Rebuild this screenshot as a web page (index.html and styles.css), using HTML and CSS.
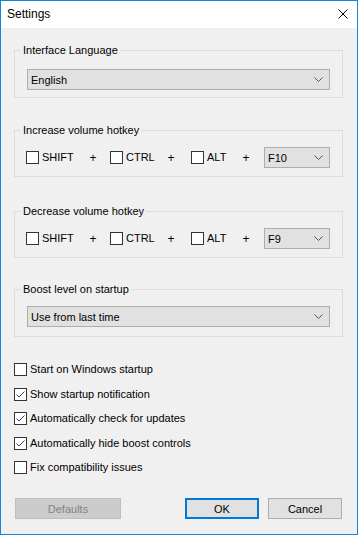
FILE: index.html
```html
<!DOCTYPE html>
<html lang="en">
<head>
  <meta charset="UTF-8" />
  <title>Settings</title>
  <link rel="stylesheet" href="styles.css">
</head>
<body>
  <div class="window">
    <!-- Title bar -->
    <div class="titlebar">
      <span class="title">Settings</span>
      <svg class="close" width="10" height="10" viewBox="0 0 10 10">
        <path d="M0.5 0.5 L9.5 9.5 M9.5 0.5 L0.5 9.5" stroke="#000" stroke-width="1" fill="none"/>
      </svg>
    </div>

    <div class="content">
      <!-- Language -->
      <div class="group group-lang">
        <span class="group-title">Interface Language</span>
        <div class="combo combo-wide">
          <span>English</span>
          <svg class="chevron" width="9" height="5" viewBox="0 0 9 5"><path d="M0.5 0.5 L4.5 4.5 L8.5 0.5" stroke="#555" fill="none"/></svg>
        </div>
      </div>

      <!-- Increase hotkey -->
      <div class="group group-up">
        <span class="group-title">Increase volume hotkey</span>
        <div class="hotkey-row">
          <label class="check w-shift"><span class="box"></span>SHIFT</label>
          <span class="plus">+</span>
          <label class="check w-ctrl"><span class="box"></span>CTRL</label>
          <span class="plus">+</span>
          <label class="check w-alt"><span class="box"></span>ALT</label>
          <span class="plus">+</span>
          <div class="combo combo-key">
            <span>F10</span>
            <svg class="chevron" width="9" height="5" viewBox="0 0 9 5"><path d="M0.5 0.5 L4.5 4.5 L8.5 0.5" stroke="#555" fill="none"/></svg>
          </div>
        </div>
      </div>

      <!-- Decrease hotkey -->
      <div class="group group-down">
        <span class="group-title">Decrease volume hotkey</span>
        <div class="hotkey-row">
          <label class="check w-shift"><span class="box"></span>SHIFT</label>
          <span class="plus">+</span>
          <label class="check w-ctrl"><span class="box"></span>CTRL</label>
          <span class="plus">+</span>
          <label class="check w-alt"><span class="box"></span>ALT</label>
          <span class="plus">+</span>
          <div class="combo combo-key">
            <span>F9</span>
            <svg class="chevron" width="9" height="5" viewBox="0 0 9 5"><path d="M0.5 0.5 L4.5 4.5 L8.5 0.5" stroke="#555" fill="none"/></svg>
          </div>
        </div>
      </div>

      <!-- Boost level -->
      <div class="group group-boost">
        <span class="group-title">Boost level on startup</span>
        <div class="combo combo-wide">
          <span>Use from last time</span>
          <svg class="chevron" width="9" height="5" viewBox="0 0 9 5"><path d="M0.5 0.5 L4.5 4.5 L8.5 0.5" stroke="#555" fill="none"/></svg>
        </div>
      </div>

      <!-- Options -->
      <div class="options">
        <label class="check"><span class="box"></span>Start on Windows startup</label>
        <label class="check"><span class="box"><svg width="11" height="11" viewBox="0 0 11 11"><path d="M1.5 5.5 L4 8 L9.5 2.5" stroke="#444" fill="none"/></svg></span>Show startup notification</label>
        <label class="check"><span class="box"><svg width="11" height="11" viewBox="0 0 11 11"><path d="M1.5 5.5 L4 8 L9.5 2.5" stroke="#444" fill="none"/></svg></span>Automatically check for updates</label>
        <label class="check"><span class="box"><svg width="11" height="11" viewBox="0 0 11 11"><path d="M1.5 5.5 L4 8 L9.5 2.5" stroke="#444" fill="none"/></svg></span>Automatically hide boost controls</label>
        <label class="check"><span class="box"></span>Fix compatibility issues</label>
      </div>

      <!-- Buttons -->
      <div class="footer">
        <button class="btn btn-defaults" disabled>Defaults</button>
        <div class="footer-right">
          <button class="btn btn-ok">OK</button>
          <button class="btn">Cancel</button>
        </div>
      </div>
    </div>
  </div>
</body>
</html>
```

FILE: styles.css
```css
/* Window */
body {
  margin: 0;
  background: #ffffff;
  font-family: 'Liberation Sans', Arial, sans-serif;
  font-size: 11px;
  color: #000;
}
.window {
  box-sizing: border-box;
  width: 358px;
  height: 535px;
  border: 1px solid #1883d7;
  background: #f0f0f0;
  display: flex;
  flex-direction: column;
}
.titlebar {
  height: 27px;
  background: #fff;
  display: flex;
  align-items: center;
  justify-content: space-between;
  padding: 0 9px 0 6px;
}
.title {
  font-size: 12px;
  margin-top: -1px;
}
.close {
  margin-top: -2px;
}
.content {
  padding: 22px 14px 0 13px;
}

/* Group boxes */
.group {
  position: relative;
  border: 1px solid #dcdcdc;
}
.group-title {
  position: absolute;
  top: -7px;
  left: 6px;
  padding: 0 2px;
  background: #f0f0f0;
  line-height: 13px;
}
.group-lang {
  padding: 18px 12px 7px 12px;
}
.group-up {
  margin-top: 32px;
  padding: 16px 12px 8px 11px;
}
.group-down {
  margin-top: 34px;
  padding: 16px 12px 8px 11px;
}
.group-boost {
  margin-top: 31px;
  padding: 16px 12px 9px 12px;
}

/* Combo boxes */
.combo {
  box-sizing: border-box;
  height: 21px;
  background: #e1e1e1;
  border: 1px solid #adadad;
  display: flex;
  align-items: center;
  justify-content: space-between;
  padding: 0 6px 0 3px;
}
.combo-key {
  width: 66px;
}

/* Hotkey rows */
.hotkey-row {
  display: flex;
  align-items: center;
}
.plus {
  width: 18px;
  text-align: center;
  font-size: 12px;
}
.w-shift { width: 58px; }
.w-ctrl { width: 52px; margin-left: 8px; }
.w-alt { width: 46px; margin-left: 11px; }
.combo-key { margin-left: 9px; }

/* Check boxes */
.check {
  display: flex;
  align-items: center;
  gap: 3px;
  line-height: 13px;
}
.box {
  box-sizing: border-box;
  width: 13px;
  height: 13px;
  border: 1px solid #333;
  background: #fff;
  display: flex;
  align-items: center;
  justify-content: center;
  flex-shrink: 0;
}
.options {
  margin-top: 26px;
  display: flex;
  flex-direction: column;
  gap: 11.5px;
}

/* Footer buttons */
.footer {
  margin-top: 24px;
  padding-left: 1px;
  display: flex;
  justify-content: space-between;
  padding-right: 1px;
}
.footer-right {
  display: flex;
  gap: 9px;
}
.btn {
  box-sizing: border-box;
  height: 21px;
  width: 74px;
  background: #e1e1e1;
  border: 1px solid #adadad;
  font-family: inherit;
  font-size: 11px;
  color: #000;
  padding: 0;
}
.btn-defaults {
  width: 106px;
  background: #cccccc;
  border-color: #bfbfbf;
  color: #838383;
}
.btn-ok {
  border: 2px solid #0078d7;
}
```
